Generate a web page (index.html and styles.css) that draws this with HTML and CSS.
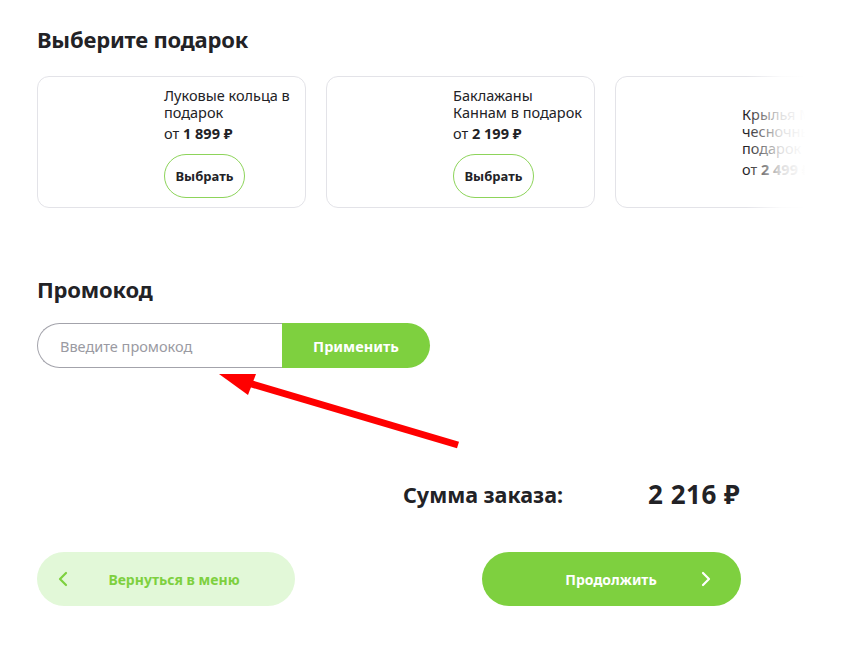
FILE: index.html
```html
<!DOCTYPE html>
<html lang="ru">
<head>
<meta charset="utf-8">
<link rel="stylesheet" href="styles.css">
</head>
<body>
<main class="page">
  <h2 class="title gift-title">Выберите подарок</h2>
  <div class="gifts">
    <div class="gift-row">
      <div class="card">
        <div class="card-body">
          <div class="card-name">Луковые кольца в подарок</div>
          <div class="card-price">от <b>1 899 ₽</b></div>
          <button class="pick">Выбрать</button>
        </div>
      </div>
      <div class="card">
        <div class="card-body">
          <div class="card-name">Баклажаны Каннам в подарок</div>
          <div class="card-price">от <b>2 199 ₽</b></div>
          <button class="pick">Выбрать</button>
        </div>
      </div>
      <div class="card">
        <div class="card-body">
          <div class="card-name">Крылья Медовые чесночные S в подарок</div>
          <div class="card-price">от <b>2 499 ₽</b></div>
        </div>
      </div>
    </div>
    <div class="fade"></div>
  </div>

  <h2 class="title promo-title">Промокод</h2>
  <div class="promo">
    <input class="promo-input" type="text" placeholder="Введите промокод">
    <button class="promo-btn">Применить</button>
  </div>

  <div class="summary">
    <span class="sum-label">Сумма заказа:</span>
    <span class="sum-value">2 216 ₽</span>
  </div>

  <div class="actions">
    <button class="btn back">
      <svg class="chev" width="10" height="16" viewBox="0 0 10 16"><path d="M8 2 L2 8 L8 14" fill="none" stroke="currentColor" stroke-width="2.2" stroke-linecap="round" stroke-linejoin="round"/></svg>
      <span>Вернуться в меню</span>
    </button>
    <button class="btn next">
      <span>Продолжить</span>
      <svg class="chev" width="10" height="16" viewBox="0 0 10 16"><path d="M2 2 L8 8 L2 14" fill="none" stroke="currentColor" stroke-width="2.2" stroke-linecap="round" stroke-linejoin="round"/></svg>
    </button>
  </div>

  <svg class="arrow" width="853" height="654" viewBox="0 0 853 654">
    <line x1="458" y1="445" x2="245" y2="382" stroke="#ff0000" stroke-width="7"/>
    <polygon points="219,374 256,374 248,395" fill="#ff0000"/>
  </svg>
</main>
</body>
</html>
```
FILE: styles.css
```css
* { box-sizing: border-box; }
html, body { margin: 0; padding: 0; background: #fff; }
body {
  font-family: "Noto Sans", "Open Sans", sans-serif;
  color: #222226;
}
.page {
  position: relative;
  width: 853px;
  height: 654px;
  padding: 0 0 0 37px;
  overflow: hidden;
}
.title {
  margin: 0;
  font-size: 22px;
  font-weight: 700;
  line-height: 28px;
  color: #222226;
  letter-spacing: -0.2px;
}
.gift-title { padding-top: 25px; }
.gifts {
  position: relative;
  margin-top: 23px;
  width: 779px;
  overflow: hidden;
}
.gift-row {
  display: flex;
  gap: 20px;
  width: 900px;
}
.card {
  flex: 0 0 269px;
  height: 132px;
  border: 1px solid #e3e3e8;
  border-radius: 12px;
  display: flex;
  align-items: center;
  padding-left: 126px;
}
.card-body { width: 135px; }
.card-name {
  font-size: 14.5px;
  line-height: 17px;
  color: #222226;
}
.card-price {
  margin-top: 3px;
  font-size: 14.5px;
  line-height: 18px;
}
.card-price b { font-weight: 700; }
.pick {
  margin-top: 12px;
  width: 81px;
  height: 44px;
  border: 1px solid #8dd45a;
  border-radius: 22px;
  background: #fff;
  font-family: inherit;
  font-size: 13px;
  font-weight: 700;
  color: #222226;
  padding: 0;
}
.fade {
  position: absolute;
  top: 0;
  right: 0;
  width: 70px;
  height: 100%;
  background: linear-gradient(to right, rgba(255,255,255,0), rgba(255,255,255,0.85) 50%, #fff 85%);
}
.promo-title { margin-top: 67px; }
.promo {
  display: flex;
  margin-top: 20px;
  width: 393px;
  height: 45px;
}
.promo-input {
  flex: 0 0 245px;
  height: 45px;
  border: 1px solid #a3a3ab;
  border-right: none;
  border-radius: 23px 0 0 23px;
  padding: 0 0 0 22px;
  font-family: inherit;
  font-size: 14.5px;
  color: #222;
  outline: none;
}
.promo-input::placeholder { color: #9a9aa2; }
.promo-btn {
  flex: 1;
  border: none;
  background: #7ed03f;
  color: #fff;
  border-radius: 0 23px 23px 0;
  font-family: inherit;
  font-size: 14.5px;
  font-weight: 700;
  padding: 0;
}
.summary {
  display: flex;
  align-items: center;
  margin-top: 111px;
  margin-left: 366px;
  height: 30px;
}
.sum-label {
  font-size: 21.5px;
  font-weight: 700;
  width: 245px;
}
.sum-value {
  font-size: 26px;
  font-weight: 700;
  letter-spacing: 0.5px;
}
.actions {
  display: flex;
  justify-content: space-between;
  width: 704px;
  margin-top: 43px;
}
.btn {
  display: flex;
  align-items: center;
  height: 54px;
  width: 259px;
  border: none;
  border-radius: 27px;
  font-family: inherit;
  font-size: 14px;
  font-weight: 700;
}
.back {
  width: 258px;
  background: #e2f8d8;
  color: #7ed03f;
  padding: 0 26px 0 21px;
}
.back span { flex: 1; text-align: center; padding-left: 11px; }
.next {
  background: #7ed03f;
  color: #fff;
  padding: 0 30px 0 30px;
}
.next span { flex: 1; text-align: center; padding-left: 9px; }
.arrow {
  position: absolute;
  left: 0;
  top: 0;
  pointer-events: none;
}
```
